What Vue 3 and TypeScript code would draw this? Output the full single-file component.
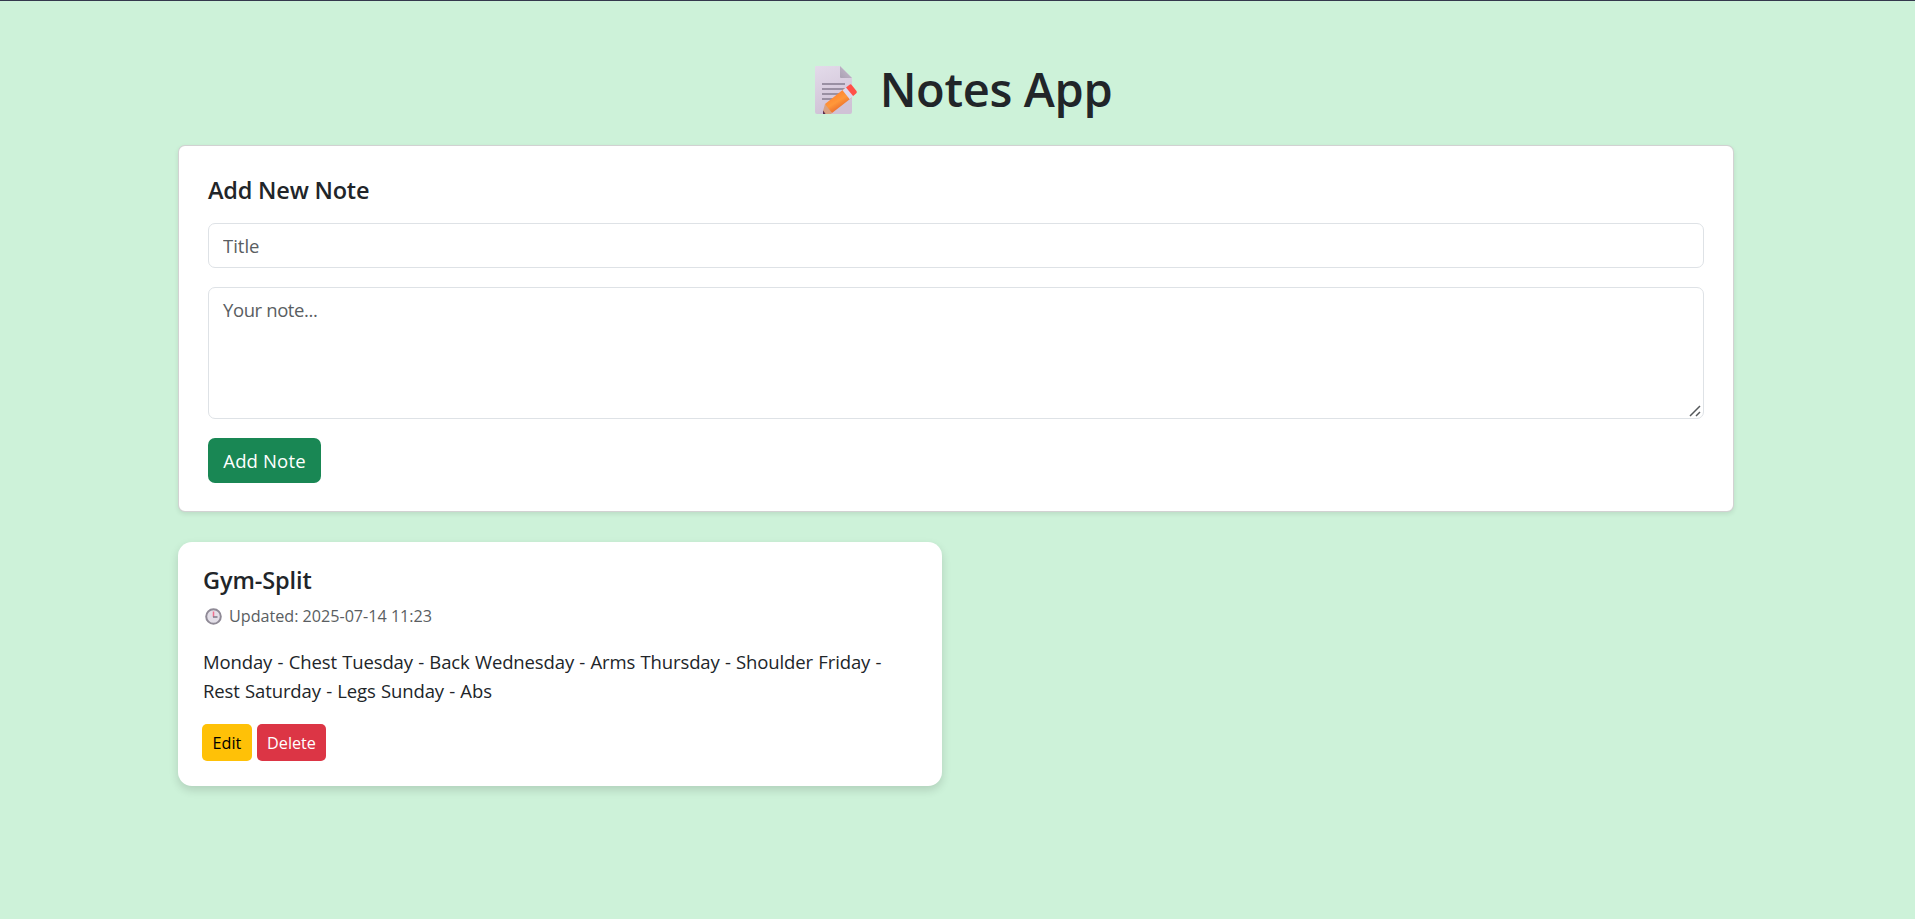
<script setup lang="ts">
import { ref } from 'vue'

interface Note {
  id: number
  title: string
  updated: string
  content: string
}

const title = ref('')
const content = ref('')
const notes = ref<Note[]>([
  {
    id: 1,
    title: 'Gym-Split',
    updated: '2025-07-14 11:23',
    content:
      'Monday - Chest Tuesday - Back Wednesday - Arms Thursday - Shoulder Friday - Rest Saturday - Legs Sunday - Abs',
  },
])

function addNote() {
  if (!title.value.trim()) return
  notes.value.push({
    id: Date.now(),
    title: title.value,
    updated: new Date().toISOString().slice(0, 16).replace('T', ' '),
    content: content.value,
  })
  title.value = ''
  content.value = ''
}

function deleteNote(id: number) {
  notes.value = notes.value.filter((n) => n.id !== id)
}

function editNote(note: Note) {
  title.value = note.title
  content.value = note.content
  deleteNote(note.id)
}
</script>

<template>
  <main class="page">
    <div class="container">
      <h1 class="heading">
        <svg class="memo" viewBox="0 0 44 50" aria-hidden="true">
          <defs>
            <linearGradient id="paper" x1="0" y1="0" x2="0.3" y2="1">
              <stop offset="0" stop-color="#e3dbea" />
              <stop offset="1" stop-color="#d0c2d6" />
            </linearGradient>
            <linearGradient id="fold" x1="0" y1="1" x2="1" y2="0">
              <stop offset="0" stop-color="#aaa1b3" />
              <stop offset="1" stop-color="#c9bfd0" />
            </linearGradient>
            <linearGradient id="pencil" x1="0.3" y1="0.2" x2="0.7" y2="0.8">
              <stop offset="0" stop-color="#ff8230" />
              <stop offset="0.5" stop-color="#ff983a" />
              <stop offset="1" stop-color="#e9682a" />
            </linearGradient>
          </defs>
          <path d="M2 1h24l12 12v34a2 2 0 0 1-2 2H3a2 2 0 0 1-2-2V2a1 1 0 0 1 1-1z" fill="url(#paper)" />
          <path d="M26 1l12 12H27a1 1 0 0 1-1-1z" fill="url(#fold)" />
          <path d="M8 19h23M8 24h23M8 29h19M8 34h13" stroke="#9a90a3" stroke-width="1.9" />
          <path d="M11 39L30.500 23.500l7.500 9L18 48l-5-3z" fill="url(#pencil)" />
          <path d="M11 39l7 9-1 1H9.500L9 46z" fill="#d9a283" />
          <path d="M9 45.500l2.600 3.500H9z" fill="#5a2c4c" />
          <path d="M28.500 25.200l4-3.200 7.200 9-4 3.200z" fill="#ded8ee" />
          <path d="M32 22.400l3.200-2.500q1.500-1.200 2.700.3l4.600 5.800q1 1.300-.4 2.500l-3 2.600z" fill="#ff5148" />
        </svg>
        <span>Notes App</span>
      </h1>

      <section class="card form-card">
        <h2 class="form-title">Add New Note</h2>
        <form class="form" @submit.prevent="addNote">
          <input v-model="title" class="field" type="text" placeholder="Title" />
          <div class="area-wrap">
            <textarea v-model="content" class="field area" placeholder="Your note..."></textarea>
            <svg class="grip" viewBox="0 0 12 12" aria-hidden="true">
              <path d="M1 11L11 1M7 11L11 7" />
            </svg>
          </div>
          <button class="btn btn-add" type="submit">Add Note</button>
        </form>
      </section>

      <section class="notes">
        <article v-for="note in notes" :key="note.id" class="note">
          <h2 class="note-title">{{ note.title }}</h2>
          <div class="meta">
            <svg class="clock" viewBox="0 0 17 17" aria-hidden="true">
              <circle cx="8.500" cy="8.500" r="7.300" fill="#e3dfe8" stroke="#8f8a96" stroke-width="2" />
              <path d="M8.500 3.500V9" stroke="#f1708f" stroke-width="1.500" />
              <path d="M8 9h4.500" stroke="#857f8e" stroke-width="1.600" />
            </svg>
            <span>Updated: {{ note.updated }}</span>
          </div>
          <p class="content">{{ note.content }}</p>
          <div class="actions">
            <button class="btn btn-sm btn-edit" type="button" @click="editNote(note)">Edit</button>
            <button class="btn btn-sm btn-delete" type="button" @click="deleteNote(note.id)">Delete</button>
          </div>
        </article>
      </section>
    </div>
  </main>
</template>

<style>
body {
  margin: 0;
  background: #cdf2d9;
}
</style>

<style scoped>
*,
*::before,
*::after {
  box-sizing: border-box;
}

.page {
  min-height: 919px;
  padding: 59px 3px 0 0;
  border-top: 1px solid #34384d;
  background: #cdf2d9;
  color: #212529;
  font-family: 'Open Sans', 'Noto Sans', sans-serif;
  font-size: 18.5px;
  line-height: 29px;
}

.container {
  width: 1556px;
  margin: 0 auto;
}

.heading {
  display: flex;
  align-items: center;
  justify-content: center;
  gap: 22px;
  height: 58px;
  margin: 0 0 27px;
  padding-left: 14px;
  font-size: 47px;
  font-weight: 600;
  letter-spacing: -0.35px;
  line-height: 58px;
}

.memo {
  width: 44px;
  height: 50px;
  margin-top: 2px;
}

.card {
  border: 1px solid rgba(0, 0, 0, 0.175);
  border-radius: 7px;
  background: #fff;
  box-shadow: 0 2px 5px rgba(0, 0, 0, 0.09);
}

.form-card {
  height: 367px;
  padding: 30px 29px 28px;
}

.form-title,
.note-title {
  margin: 0;
  font-size: 23.5px;
  font-weight: 600;
  letter-spacing: -0.2px;
  line-height: 29px;
}

.note-title {
  letter-spacing: -0.1px;
}

.form {
  display: flex;
  flex-direction: column;
  align-items: flex-start;
  margin-top: 18px;
}

.field {
  display: block;
  width: 100%;
  height: 45px;
  margin: 0;
  padding: 7px 15px 7px 14px;
  border: 1px solid #dee2e6;
  border-radius: 7px;
  outline: 0;
  background: #fff;
  color: #212529;
  font: inherit;
  resize: none;
}

.field::placeholder {
  color: #5a5e62;
  opacity: 1;
}

.area-wrap {
  position: relative;
  width: 100%;
  margin: 19px 0;
}

.area {
  height: 132px;
}

.area::placeholder {
  letter-spacing: -0.4px;
}

.grip {
  position: absolute;
  right: 3px;
  bottom: 2px;
  width: 12px;
  height: 12px;
  fill: none;
  stroke: #55585b;
  stroke-width: 1.5;
}

.btn {
  padding: 0;
  border: 0;
  border-radius: 7px;
  font: inherit;
  text-align: center;
  cursor: pointer;
}

.btn-add {
  width: 113px;
  height: 45px;
  background: #198754;
  color: #fff;
  letter-spacing: 0.15px;
}

.notes {
  display: grid;
  grid-template-columns: 764px 764px;
  gap: 28px;
  margin-top: 30px;
}

.note {
  height: 244px;
  padding: 24px 24px 0 25px;
  border-radius: 14px;
  background: #fff;
  box-shadow: 0 4px 10px rgba(0, 0, 0, 0.14);
}

.meta {
  display: flex;
  align-items: center;
  gap: 7px;
  margin-top: 9px;
  padding-left: 2px;
  color: #5a5e62;
  font-size: 16.2px;
  letter-spacing: -0.03px;
  line-height: 25px;
}

.clock {
  width: 17px;
  height: 17px;
}

.content {
  margin: 18px 0 19px;
  letter-spacing: -0.12px;
  word-spacing: 0.6px;
}

.actions {
  display: flex;
  gap: 5px;
  margin-left: -1px;
}

.btn-sm {
  height: 37px;
  padding-top: 1px;
  border-radius: 5px;
  font-size: 16.2px;
}

.btn-edit {
  width: 50px;
  background: #ffc107;
  color: #000;
}

.btn-delete {
  width: 69px;
  background: #dc3545;
  color: #fff;
}
</style>
